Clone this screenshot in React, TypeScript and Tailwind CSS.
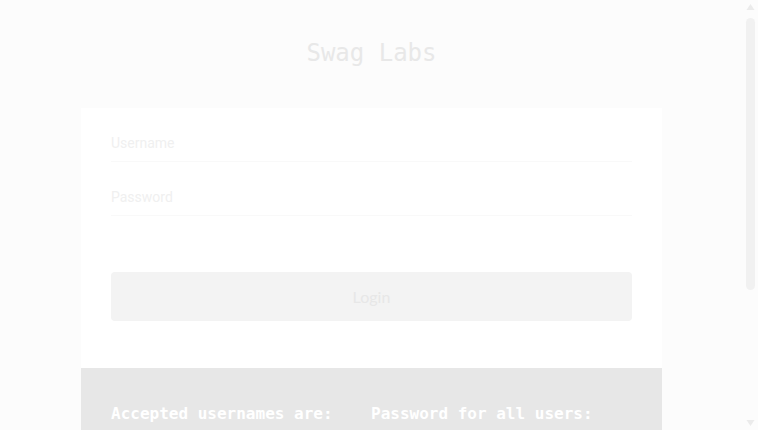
import React from "react";

const USERNAMES = [
  "standard_user",
  "locked_out_user",
  "problem_user",
  "performance_glitch_user",
  "error_user",
  "visual_user",
];

function Scrollbar() {
  return (
    <div className="flex h-[430px] w-[15px] shrink-0 flex-col items-center bg-[#fcfcfc]">
      <svg width="9" height="15" viewBox="0 0 9 15" className="shrink-0">
        <path d="M4.5 4 L8.5 10 L0.5 10 Z" fill="#ebebeb" />
      </svg>
      <div className="mt-[3px] h-[272px] w-[9px] rounded-full bg-[#f1f1f1]" />
      <div className="flex-1" />
      <svg width="9" height="15" viewBox="0 0 9 15" className="shrink-0">
        <path d="M0.5 5 L8.5 5 L4.5 11 Z" fill="#ebebeb" />
      </svg>
    </div>
  );
}

export default function App() {
  return (
    <div className="flex h-[430px] overflow-hidden bg-[#fcfcfc]">
      <div className="min-w-0 flex-1 overflow-hidden">
        <div className="pt-[39px] pb-[41px] text-center">
          <h1 className="font-['DejaVu_Sans_Mono',monospace] text-[24px] font-normal leading-[28px] text-[#e8e8e8]">
            Swag Labs
          </h1>
        </div>

        <div className="mx-auto w-[581px]">
          <form
            className="bg-white px-[30px] pt-[16px] pb-[47px]"
            onSubmit={(e) => e.preventDefault()}
          >
            <div className="flex flex-col gap-[16px]">
              <input
                type="text"
                placeholder="Username"
                className="h-[38px] w-full border-b border-[#f9f9f9] bg-transparent font-['Roboto',sans-serif] text-[14px] outline-none placeholder:text-[#f0f0f0]"
              />
              <input
                type="password"
                placeholder="Password"
                className="h-[38px] w-full border-b border-[#f9f9f9] bg-transparent font-['Roboto',sans-serif] text-[14px] outline-none placeholder:text-[#f0f0f0]"
              />
            </div>
            <button
              type="submit"
              className="mt-[56px] h-[49px] w-full rounded-[4px] bg-[#f3f3f3] font-['Lato',sans-serif] text-[16px] text-[#e7e7e7]"
            >
              Login
            </button>
          </form>

          <div className="h-[264px] bg-[#e7e7e7] px-[30px] pt-[34px] font-['DejaVu_Sans_Mono',monospace] text-white">
            <div className="grid grid-cols-[260px_260px]">
              <div>
                <h4 className="text-[16px] font-bold leading-[24px]">
                  Accepted usernames are:
                </h4>
                <ul className="mt-[8px] text-[14px] leading-[22px]">
                  {USERNAMES.map((u) => (
                    <li key={u}>{u}</li>
                  ))}
                </ul>
              </div>
              <div>
                <h4 className="text-[16px] font-bold leading-[24px]">
                  Password for all users:
                </h4>
                <p className="mt-[8px] text-[14px] leading-[22px]">secret_sauce</p>
              </div>
            </div>
          </div>
        </div>
      </div>
      <Scrollbar />
    </div>
  );
}
